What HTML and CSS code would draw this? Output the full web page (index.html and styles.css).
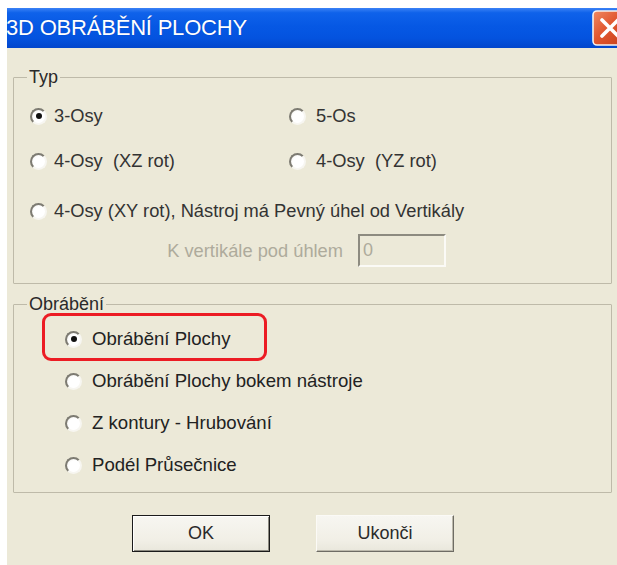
FILE: index.html
```html
<!DOCTYPE html>
<html lang="cs">
<head>
<meta charset="utf-8">
<title>3D obrábění plochy</title>
<link rel="stylesheet" href="styles.css">
</head>
<body>
<div class="window">
  <div class="titlebar">
    <span class="title">3D OBRÁBĚNÍ PLOCHY</span>
    <span class="close" aria-label="Zavřít">
      <svg width="36" height="36" viewBox="0 0 36 36">
        <defs>
          <linearGradient id="closeFill" x1="0" y1="0" x2="1" y2="1">
            <stop offset="0" stop-color="#f08a62"/>
            <stop offset="0.45" stop-color="#e1572f"/>
            <stop offset="1" stop-color="#c53c18"/>
          </linearGradient>
        </defs>
        <rect x="1" y="1" width="34" height="34" rx="4" fill="url(#closeFill)" stroke="#f6f3ee" stroke-width="1.6"/>
        <path d="M10 10 L26 26 M26 10 L10 26" stroke="#fff" stroke-width="3.6" stroke-linecap="round"/>
      </svg>
    </span>
  </div>

  <div class="content">
    <fieldset class="group group-typ">
      <legend>Typ</legend>
      <div class="typ-grid">
        <div class="opt"><span class="radio checked"></span>3-Osy</div>
        <div class="opt opt-right"><span class="radio"></span>5-Os</div>
        <div class="opt"><span class="radio"></span>4-Osy&nbsp; (XZ rot)</div>
        <div class="opt opt-right"><span class="radio"></span>4-Osy&nbsp; (YZ rot)</div>
        <div class="opt opt-wide"><span class="radio"></span>4-Osy (XY rot), Nástroj má Pevný úhel od Vertikály</div>
      </div>
      <div class="angle-row">
        <span class="angle-label">K vertikále pod úhlem</span>
        <span class="field">0</span>
      </div>
    </fieldset>

    <fieldset class="group group-mode">
      <legend>Obrábění</legend>
      <div class="mode-list">
        <div class="opt highlight"><span class="radio checked"></span>Obrábění Plochy</div>
        <div class="opt"><span class="radio"></span>Obrábění Plochy bokem nástroje</div>
        <div class="opt"><span class="radio"></span>Z kontury - Hrubování</div>
        <div class="opt"><span class="radio"></span>Podél Průsečnice</div>
      </div>
    </fieldset>

    <div class="actions">
      <span class="btn btn-default">OK</span>
      <span class="btn">Ukonči</span>
    </div>
  </div>
</div>
</body>
</html>
```
FILE: styles.css
```css
html, body {
  margin: 0;
  background: #ffffff;
  height: 565px;
  overflow: hidden;
  font-family: "Liberation Sans", Arial, sans-serif;
}

.window {
  margin: 8px 0 0 7px;
  height: 557px;
  background: #ece9d8;
  overflow: hidden;
}

/* Blue XP-style caption */
.titlebar {
  height: 40px;
  display: flex;
  align-items: center;
  justify-content: space-between;
  overflow: hidden;
  background: linear-gradient(180deg, #3b82f6 0%, #0f62ea 12%, #0658e4 45%, #0453df 75%, #0246cc 100%);
}

.title {
  color: #ffffff;
  font-size: 22px;
  margin-left: -1px;
  letter-spacing: -0.2px;
  text-shadow: 0 0 1px rgba(0, 30, 120, 0.4);
}

.close {
  flex: none;
  width: 36px;
  height: 36px;
  margin-right: -11px;
}

.close svg {
  display: block;
}

.content {
  padding: 19px 5px 0 6px;
}

/* Group boxes */
.group {
  margin: 0;
  min-width: 0;
  border: 1px solid #bebaa9;
  border-radius: 1px;
}

.group legend {
  font-size: 18px;
  line-height: 20px;
  padding: 0 2px;
  color: #2a2a2a;
}

.group-typ {
  padding: 16px 0 16px 16px;
}

.group-typ legend {
  margin-left: -3px;
}

.group-mode {
  margin-top: 10px;
  padding: 13px 0 15px 51px;
}

.group-mode legend {
  margin-left: -38px;
}

/* Radio options */
.opt {
  display: flex;
  align-items: center;
  gap: 7px;
  height: 24px;
  font-size: 18.3px;
  color: #333333;
  white-space: nowrap;
}

.radio {
  flex: none;
  width: 17px;
  height: 17px;
  box-sizing: border-box;
  border-radius: 50%;
  border: 2px solid;
  border-color: #7d7b72 #f7f6f1 #f7f6f1 #7d7b72;
  background: radial-gradient(circle at 60% 60%, #ffffff 55%, #ecebe6 100%);
  display: flex;
  align-items: center;
  justify-content: center;
}

.radio.checked::after {
  content: "";
  width: 6px;
  height: 6px;
  border-radius: 50%;
  background: #111111;
}

.typ-grid {
  display: grid;
  grid-template-columns: 259px auto;
  row-gap: 21px;
  margin-top: 1px;
}

.opt-right {
  gap: 10px;
}

.opt-wide {
  grid-column: 1 / -1;
  margin-top: 5px;
}

.angle-row {
  display: flex;
  align-items: center;
  margin-top: 11px;
}

.angle-label {
  width: 313px;
  text-align: right;
  font-size: 18.3px;
  color: #aeab9c;
  white-space: nowrap;
}

.field {
  margin-left: 15px;
  width: 88px;
  height: 33px;
  box-sizing: border-box;
  border: 2px solid;
  border-color: #8d8b80 #fbfaf6 #fbfaf6 #8d8b80;
  padding-left: 3px;
  font-size: 18px;
  line-height: 29px;
  color: #aeab9c;
}

.mode-list {
  display: flex;
  flex-direction: column;
  gap: 18px;
}

.mode-list .opt {
  gap: 10px;
  font-size: 18.6px;
  color: #222222;
}

.highlight {
  width: 225px;
  height: 48px;
  box-sizing: border-box;
  border: 3px solid #ec1c24;
  border-radius: 9px;
  margin: -14px 0 -10px -23px;
  padding: 11px 0 7px 20px;
}

/* Dialog buttons */
.actions {
  display: flex;
  gap: 46px;
  margin-top: 22px;
  padding-left: 119px;
}

.btn {
  width: 138px;
  height: 37px;
  box-sizing: border-box;
  display: flex;
  align-items: center;
  justify-content: center;
  font-size: 18px;
  color: #2a2a2a;
  background: linear-gradient(180deg, #f7f6f1 0%, #f1efe6 70%, #e9e7dc 100%);
  border: 1px solid;
  border-color: #fbfaf6 #6e6c64 #6e6c64 #fbfaf6;
  box-shadow: inset -1px -1px 0 #bdbaac;
}

.btn-default {
  border: 1px solid #1b1b1b;
  box-shadow: inset 1px 1px 0 #ffffff, inset -1px -1px 0 #8c8a80;
}
```
